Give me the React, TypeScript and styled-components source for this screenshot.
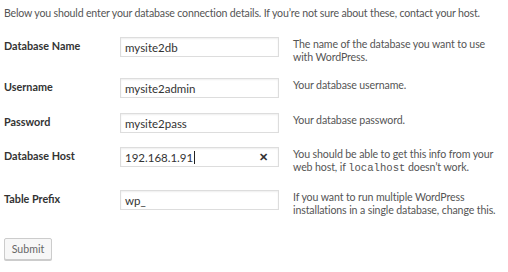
import React from "react";
import styled, { createGlobalStyle } from "styled-components";

const Global = createGlobalStyle`
  html, body { margin: 0; padding: 0; background: #fff; }
  body { font-family: Lato, "Open Sans", sans-serif; color: #444; }
`;

const Page = styled.div`
  width: 508px;
  height: 272px;
  padding: 6px 4px 0 4px;
  box-sizing: border-box;
  overflow: hidden;
`;

const Intro = styled.p`
  margin: 0 0 10px 0;
  font-size: 10.6px;
  letter-spacing: -0.17px;
  line-height: 14px;
  color: #555;
  white-space: nowrap;
`;

const Form = styled.div`
  display: grid;
  grid-template-columns: 116px 159px 1fr;
`;

const Row = styled.div`
  display: contents;
`;

const Cell = styled.div<{ $bottom?: number }>`
  padding: 7px 0 ${(p) => p.$bottom ?? 7}px 0;
`;

const Label = styled.label`
  display: block;
  font-weight: 700;
  font-size: 10.8px;
  line-height: 14px;
  color: #333;
  padding-top: 2px;
`;

const InputBox = styled.div`
  height: 20px;
  box-sizing: border-box;
  border: 1px solid #ddd;
  box-shadow: inset 0 1px 2px rgba(0, 0, 0, 0.07);
  background: #fff;
  display: flex;
  align-items: center;
  padding: 0 4px;
  font-size: 11.5px;
  color: #333;
`;

const Caret = styled.span`
  display: inline-block;
  width: 1px;
  height: 13px;
  background: #222;
  margin-left: 1px;
`;

const Clear = styled.span`
  margin-left: auto;
  margin-right: 6px;
  font-size: 11px;
  font-weight: 700;
  color: #333;
`;

const Desc = styled.div`
  padding-left: 14px;
  padding-top: 1px;
  font-size: 10.6px;
  letter-spacing: -0.12px;
  line-height: 13px;
  color: #555;
  white-space: nowrap;
`;

const Code = styled.code`
  font-family: "Liberation Mono", "DejaVu Sans Mono", monospace;
  font-size: 10.6px;
  letter-spacing: 0;
  color: #555;
`;

const Button = styled.button`
  margin-top: 14px;
  height: 22px;
  width: 48px;
  border: 1px solid #ccc;
  border-radius: 2px;
  background: #f7f7f7;
  box-shadow: 0 1px 0 #ccc;
  color: #666;
  font-family: inherit;
  font-size: 10.6px;
  padding: 0;
`;

type Field = { label: string; value: string; desc: React.ReactNode; focus?: boolean; bottom?: number };

const fields: Field[] = [
  { label: "Database Name", value: "mysite2db", desc: <>The name of the database you want to use<br />with WordPress.</> },
  { label: "Username", value: "mysite2admin", bottom: 8, desc: "Your database username." },
  { label: "Password", value: "mysite2pass", desc: "Your database password." },
  {
    label: "Database Host",
    value: "192.168.1.91",
    focus: true,
    bottom: 8,
    desc: <>You should be able to get this info from your<br />web host, if <Code>localhost</Code> doesn’t work.</>,
  },
  { label: "Table Prefix", value: "wp_", desc: <>If you want to run multiple WordPress<br />installations in a single database, change this.</> },
];

export default function App() {
  return (
    <Page>
      <Global />
      <Intro>Below you should enter your database connection details. If you’re not sure about these, contact your host.</Intro>
      <Form>
        {fields.map((f) => (
          <Row key={f.label}>
            <Cell $bottom={f.bottom}><Label>{f.label}</Label></Cell>
            <Cell $bottom={f.bottom}>
              <InputBox>
                {f.value}
                {f.focus && <Caret />}
                {f.focus && <Clear>✕</Clear>}
              </InputBox>
            </Cell>
            <Cell $bottom={f.bottom}><Desc>{f.desc}</Desc></Cell>
          </Row>
        ))}
      </Form>
      <Button>Submit</Button>
    </Page>
  );
}
